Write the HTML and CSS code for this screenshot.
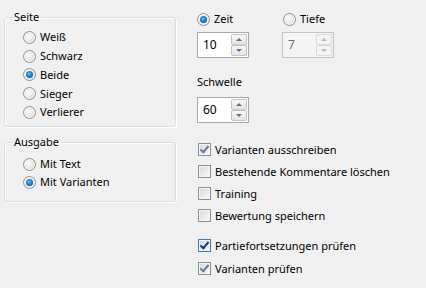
FILE: index.html
```html
<!DOCTYPE html>
<html lang="de">
<head>
    <meta charset="UTF-8">
    <title>Analyse-Optionen</title>
    <link rel="stylesheet" href="styles.css">
</head>
<body>
    <div class="dialog">
        <div class="left">
            <fieldset class="group group-side">
                <legend>Seite</legend>
                <div class="options">
                    <div class="opt"><span class="radio"></span>Weiß</div>
                    <div class="opt"><span class="radio"></span>Schwarz</div>
                    <div class="opt"><span class="radio on"></span>Beide</div>
                    <div class="opt"><span class="radio"></span>Sieger</div>
                    <div class="opt"><span class="radio"></span>Verlierer</div>
                </div>
            </fieldset>
            <fieldset class="group group-out">
                <legend>Ausgabe</legend>
                <div class="options">
                    <div class="opt"><span class="radio"></span>Mit Text</div>
                    <div class="opt"><span class="radio on"></span>Mit Varianten</div>
                </div>
            </fieldset>
        </div>

        <div class="right">
            <div class="limits">
                <div class="limit">
                    <div class="opt"><span class="radio on"></span>Zeit</div>
                    <div class="spin">
                        <span class="spin-value">10</span>
                        <span class="spin-btns"><span class="btn up"></span><span class="btn down"></span></span>
                    </div>
                </div>
                <div class="limit tiefe">
                    <div class="opt"><span class="radio"></span>Tiefe</div>
                    <div class="spin disabled">
                        <span class="spin-value">7</span>
                        <span class="spin-btns"><span class="btn up"></span><span class="btn down"></span></span>
                    </div>
                </div>
            </div>

            <div class="label">Schwelle</div>
            <div class="spin">
                <span class="spin-value">60</span>
                <span class="spin-btns"><span class="btn up"></span><span class="btn down"></span></span>
            </div>

            <div class="checks">
                <div class="chk"><span class="box checked"></span>Varianten ausschreiben</div>
                <div class="chk"><span class="box"></span>Bestehende Kommentare löschen</div>
                <div class="chk"><span class="box"></span>Training</div>
                <div class="chk"><span class="box"></span>Bewertung speichern</div>
            </div>
            <div class="checks checks-2">
                <div class="chk"><span class="box checked hot"></span>Partiefortsetzungen prüfen</div>
                <div class="chk"><span class="box checked"></span>Varianten prüfen</div>
            </div>
        </div>
    </div>
</body>
</html>
```

FILE: styles.css
```css
body { margin: 0; background: #f0f0f0; font-family: "Segoe UI", "Noto Sans", "Open Sans", sans-serif; font-size: 11px; color: #000; }
.dialog { display: flex; padding-left: 4px; width: 422px; height: 288px; }

/* left column: group boxes */
.left { width: 172px; }
.group { margin: 0; padding: 0 0 0 18px; border: 1px solid #d5dfe5; border-radius: 3px; box-shadow: inset 1px 1px 0 #fff, 1px 1px 0 #fff; min-width: 0; }
.group legend { margin-left: -11px; padding: 0 2px; line-height: 16px; }
.group-side { margin-top: 9px; height: 113px; padding-top: 3px; }
.group-out { margin-top: 7px; height: 61px; padding-top: 5px; }
.options { display: flex; flex-direction: column; }
.group-side .opt { height: 18.75px; }
.group-out .opt { height: 18px; }

.opt { display: flex; align-items: center; line-height: 16px; white-space: nowrap; }
.radio { width: 11px; height: 11px; border: 1px solid #8e8f8f; border-radius: 50%; margin-right: 4px; position: relative; flex: none;
    background: radial-gradient(circle at 40% 40%, #fafafa 0%, #e6e6e6 55%, #cfcfcf 100%); box-shadow: inset 0 0 0 1px #f6f6f6; }
.radio.on::after { content: ""; position: absolute; left: 2px; top: 2px; width: 7px; height: 7px; border-radius: 50%;
    background: radial-gradient(circle at 45% 40%, #6ec4f5 0%, #1b7fd0 45%, #0b3f78 100%); }

/* right column */
.right { margin-left: 21px; display: flex; flex-direction: column; }
.limits { display: flex; margin-top: 11px; }
.limit { display: flex; flex-direction: column; }
.limit .opt { height: 16px; }
.limit .spin { margin-top: 5px; }
.tiefe { margin-left: 33px; }
.tiefe .opt { margin-left: 1px; }

.spin { display: flex; width: 50px; height: 24px; border: 1px solid #a9a9a9; background: #fff; }
.spin-value { flex: 1; padding-left: 5px; line-height: 24px; font-size: 12px; }
.spin-btns { width: 16px; display: flex; flex-direction: column; padding: 1px 1px 1px 0; }
.btn { flex: 1; border: 1px solid #c3c3c3; border-radius: 2px; background: linear-gradient(#f7f7f7, #e4e4e4); position: relative; }
.btn.up { border-bottom-color: #d0d0d0; }
.btn::after { content: ""; position: absolute; left: 4px; top: 3px; border-left: 3px solid transparent; border-right: 3px solid transparent; }
.btn.up::after { border-bottom: 3px solid #5a6e9e; }
.btn.down::after { border-top: 3px solid #5a6e9e; }
.spin.disabled { background: #f4f4f4; border-color: #c3c3c3; }
.spin.disabled .spin-value { color: #6d6d6d; }
.spin.disabled .btn { background: #f4f4f4; border-color: #dadada; }
.spin.disabled .btn.up::after { border-bottom-color: #b8b8b8; }
.spin.disabled .btn.down::after { border-top-color: #b8b8b8; }

.label { margin-top: 16px; line-height: 16px; }
.right > .spin { margin-top: 7px; }

.checks { display: flex; flex-direction: column; margin-top: 15px; }
.checks-2 { margin-top: 8px; }
.chk { display: flex; align-items: center; height: 22px; white-space: nowrap; }
.checks-2 .chk { height: 23px; }
.box { width: 11px; height: 11px; border: 1px solid #8e8f8f; margin: 0 4px 0 1px; flex: none; position: relative;
    background: linear-gradient(135deg, #d6d6d6 0%, #e8e8e8 50%, #fbfbfb 100%); box-shadow: inset 0 0 0 1px #f4f4f4; }
.box.checked::after { content: ""; position: absolute; left: 3px; top: 0px; width: 3px; height: 7px;
    border-right: 2px solid #6b7aa3; border-bottom: 2px solid #6b7aa3; transform: rotate(40deg); }
.box.hot { border-color: #3c7fb1; background: linear-gradient(135deg, #b9def5 0%, #def0fb 60%, #f3fafe 100%); }
.box.hot::after { border-color: #21307b; }
```
